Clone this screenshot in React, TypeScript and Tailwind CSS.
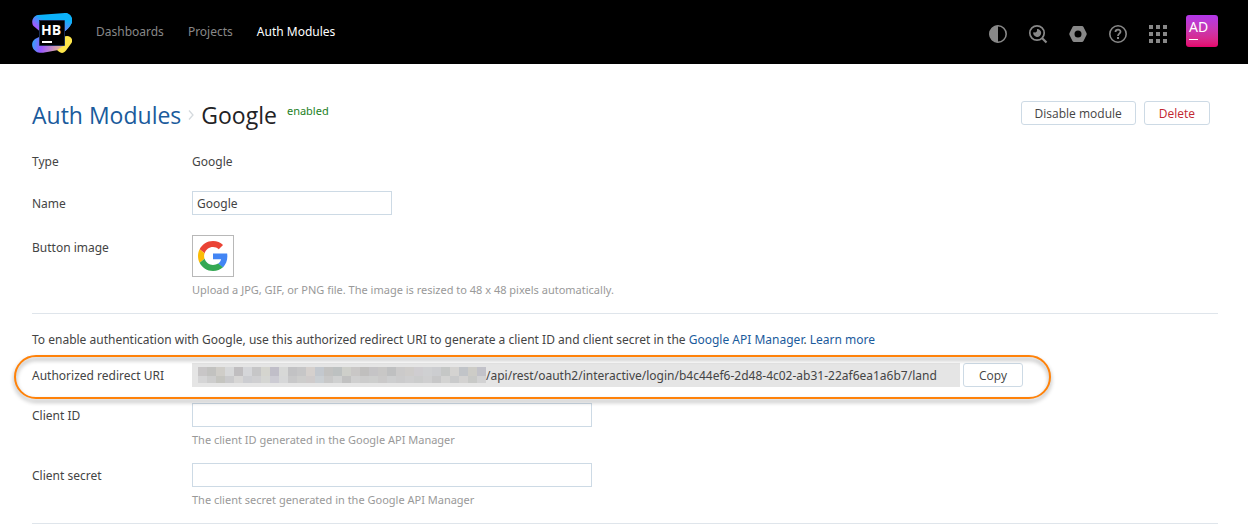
import type { ReactNode } from 'react';

const maskTop = [
  '#c8c6c7', '#c2c2c0', '#cfcdc8', '#d7d8d9', '#c0bec0', '#d5d6d9', '#c6c6c7', '#d5d5cf',
  '#c0bec8', '#d7d8d7', '#c2c2c4', '#c6c6c7', '#d5d0cd', '#c3c8ce', '#c2c2c1', '#bdc1c1',
  '#cecfca', '#c9c7c6', '#c0bfbe', '#c5c4c6', '#c8c7c6', '#bfc0c1', '#cbcaca', '#ceccca',
  '#cfcdd0', '#cfd0d2', '#cccdd0', '#c5c7c6', '#d4d3d1', '#c1c4c8', '#cdccc7', '#c2c2c9',
];
const maskBottom = [
  '#d5d5d6', '#cdcdcd', '#c5c5c0', '#cacacc', '#d7d6d5', '#cccdd1', '#cfcfd1', '#d5d6d3',
  '#cccbd3', '#d6d7d8', '#c8c8c9', '#cdcdcc', '#cfcbcb', '#cacfd3', '#c8c8c8', '#cfd0d0',
  '#c1c1c1', '#cfcfcf', '#cccccc', '#cdcecd', '#cac9c9', '#cdcecf', '#cbcbcc', '#cececf',
  '#cbcccc', '#cfcfd0', '#c7c7c8', '#d3d3d2', '#c9cacb', '#d3d2d1', '#c8c9c7', '#d2d2d3',
];

function MaskedHost() {
  return (
    <svg width="288" height="16" shapeRendering="crispEdges" className="shrink-0" aria-hidden="true">
      {maskTop.map((fill, i) => (
        <rect key={i} x={i * 9} y="0" width="9" height="9" fill={fill} />
      ))}
      {maskBottom.map((fill, i) => (
        <rect key={i} x={i * 9} y="9" width="9" height="7" fill={fill} />
      ))}
    </svg>
  );
}

function HubLogo() {
  return (
    <svg width="40" height="40" viewBox="0 0 40 40" aria-hidden="true">
      <defs>
        <linearGradient id="hubTop" x1="3" y1="16" x2="12" y2="4" gradientUnits="userSpaceOnUse">
          <stop offset="0.2" stopColor="#9b5cff" />
          <stop offset="0.9" stopColor="#0cb2fa" />
        </linearGradient>
        <linearGradient id="hubRight" x1="36" y1="5" x2="34" y2="18" gradientUnits="userSpaceOnUse">
          <stop offset="0.2" stopColor="#0cb2fa" />
          <stop offset="1" stopColor="#6a83f8" />
        </linearGradient>
        <linearGradient id="hubBottom" x1="0" y1="28" x2="34" y2="34" gradientUnits="userSpaceOnUse">
          <stop offset="0" stopColor="#2da6fb" />
          <stop offset="0.3" stopColor="#9a57ff" />
          <stop offset="0.7" stopColor="#cf9bb0" />
          <stop offset="1" stopColor="#e8c67a" />
        </linearGradient>
      </defs>
      <path d="M8 18.500 1.500 13C-1 10 0 3 6 2L33 0C38 0 41 5 40 9 39.500 12 35 17 32 19Z" fill="url(#hubTop)" />
      <path d="M32 .1 33 0C38 0 41 5 40 9 39.500 12 35 17 32 19Z" fill="url(#hubRight)" />
      <path d="M8 23.500 3 26C-1 29-1 35 4 38.500 6 40 9 40 11 39.700L32 36V24Z" fill="url(#hubBottom)" />
      <path d="M32 23.500 35 23C39 23 41.500 27 39.500 30L34 37.500C32 40.500 29 40.500 27 38.800L25 37 32 32.500Z" fill="#fde64b" />
      <rect x="7" y="7" width="25" height="25" fill="#000" />
      <path d="M7.500 7.500H32.500V32.500H7.500Z" fill="none" stroke="#1b2c50" strokeWidth="1" />
      <text x="9" y="21.500" fill="#fff" fontFamily="Open Sans, sans-serif" fontWeight="700" fontSize="14">HB</text>
      <rect x="10" y="28" width="10" height="2" fill="#fff" />
    </svg>
  );
}

function GoogleIcon() {
  return (
    <svg width="30" height="30" viewBox="0 0 48 48" aria-hidden="true">
      <path fill="#EA4335" d="M24 9.500c3.540 0 6.710 1.220 9.210 3.600l6.850-6.850C35.900 2.380 30.470 0 24 0 14.620 0 6.510 5.380 2.560 13.220l7.980 6.190C12.430 13.720 17.740 9.500 24 9.500z" />
      <path fill="#4285F4" d="M46.980 24.550c0-1.570-.15-3.090-.38-4.550H24v9.020h12.940c-.58 2.960-2.260 5.480-4.780 7.180l7.730 6c4.510-4.180 7.090-10.360 7.090-17.650z" />
      <path fill="#FBBC05" d="M10.530 28.590c-.48-1.450-.76-2.990-.76-4.590s.27-3.140.76-4.590l-7.980-6.190C.92 16.460 0 20.120 0 24c0 3.880.92 7.540 2.560 10.780l7.970-6.190z" />
      <path fill="#34A853" d="M24 48c6.480 0 11.930-2.130 15.890-5.810l-7.730-6c-2.150 1.450-4.920 2.300-8.160 2.300-6.260 0-11.570-4.220-13.470-9.910l-7.980 6.190C6.510 42.620 14.620 48 24 48z" />
    </svg>
  );
}

function IconButton({ label, children }: { label: string; children: ReactNode }) {
  return (
    <button type="button" aria-label={label} className="flex h-10 w-10 items-center justify-center text-[#888]">
      <svg width="20" height="20" viewBox="0 0 20 20" fill="none">
        {children}
      </svg>
    </button>
  );
}

function Header() {
  return (
    <header className="flex h-16 items-center bg-black pr-[30px] pl-8">
      <a href="#home" aria-label="Hub home" className="pt-0.5">
        <HubLogo />
      </a>
      <nav className="ml-6 flex gap-6 text-[12px] leading-5 text-[#888]">
        <a href="#dashboards">Dashboards</a>
        <a href="#projects">Projects</a>
        <a href="#auth-modules" className="text-white">Auth Modules</a>
      </nav>
      <div className="ml-auto flex items-center">
        <div className="flex pt-1">
          <IconButton label="Theme">
            <circle cx="10" cy="10" r="8.200" stroke="currentColor" strokeWidth="1.600" />
            <path d="M10 1.500V18.500A8.500 8.500 0 0 1 10 1.500Z" fill="currentColor" />
          </IconButton>
          <IconButton label="Search">
            <circle cx="9" cy="9" r="7.200" stroke="currentColor" strokeWidth="1.700" />
            <path d="M14 14 18.500 18.500" stroke="currentColor" strokeWidth="2.200" />
            <path d="M9 5A4 4 0 1 1 5.300 8.200L7.500 8.500 9 7.200Z" fill="currentColor" />
          </IconButton>
          <IconButton label="Administration">
            <path fillRule="evenodd" d="M6 2H14Q15 2 15.500 3L18.500 9Q19 10 18.500 11L15.500 17Q15 18 14 18H6Q5 18 4.500 17L1.500 11Q1 10 1.500 9L4.500 3Q5 2 6 2ZM10 6.500A3.500 3.500 0 1 0 10 13.500 3.500 3.500 0 1 0 10 6.500Z" fill="currentColor" />
          </IconButton>
          <IconButton label="Help">
            <circle cx="10" cy="10" r="8.200" stroke="currentColor" strokeWidth="1.600" />
            <path d="M7.500 8C7.500 4.800 12.500 4.900 12.500 7.800 12.500 9.700 10 9.700 10 12" stroke="currentColor" strokeWidth="1.800" />
            <rect x="9" y="13" width="2" height="2" fill="currentColor" />
          </IconButton>
          <IconButton label="Services">
            <path d="M1 1h4v4H1zM8 1h4v4H8zM15 1h4v4h-4zM1 8h4v4H1zM8 8h4v4H8zM15 8h4v4h-4zM1 15h4v4H1zM8 15h4v4H8zM15 15h4v4h-4z" fill="currentColor" />
          </IconButton>
        </div>
        <button type="button" aria-label="Profile" className="mb-0.5 ml-2 flex h-8 w-8 flex-col items-start rounded-[3px] bg-linear-to-b from-[#b236ea] to-[#e5006c] pt-1 pl-[3px] text-[14px] leading-4 text-white">
          AD
          <span className="mt-1 h-px w-[9px] bg-white" />
        </button>
      </div>
    </header>
  );
}

const buttonClass = "h-6 rounded-[3px] border border-[#cddae5] bg-white pt-px font-['Open_Sans',sans-serif] text-[12px] leading-4";
const inputClass = 'block h-6 border border-[#cddae5] bg-white px-1 pt-px outline-none';
const rowClass = 'flex leading-6';
const labelClass = 'w-40 shrink-0 pt-px';
const hintClass = 'text-[11px] leading-4 text-[#999]';

export default function App() {
  return (
    <div className="min-h-screen bg-white font-['Noto_Sans',sans-serif] text-[12px] text-[#444]">
      <Header />
      <main className="pr-[30px] pl-8">
        <div className="flex items-start pt-9 pr-2">
          <h1 className="flex items-center font-['Open_Sans',sans-serif] text-[23px] leading-[30px] text-[#1f2326]">
            <a href="#auth-modules" className="text-[#1a5b9c]">Auth Modules</a>
            <svg width="20" height="12" viewBox="0 0 20 12" fill="none" aria-hidden="true">
              <path d="M8 1.500 12 6 8 10.500" stroke="#d5dade" strokeWidth="1.300" />
            </svg>
            Google
          </h1>
          <span className="ml-2.5 pt-[3px] text-[11px] leading-4 text-[#237f24]">enabled</span>
          <div className="ml-auto flex gap-2 pt-px">
            <button type="button" className={`${buttonClass} px-[13px]`}>Disable module</button>
            <button type="button" className={`${buttonClass} px-[14px] text-[#c22731]`}>Delete</button>
          </div>
        </div>

        <div className={`${rowClass} mt-[19px]`}>
          <span className={labelClass}>Type</span>
          <span className="pt-px">Google</span>
        </div>
        <div className={`${rowClass} mt-[17px]`}>
          <label htmlFor="name" className={labelClass}>Name</label>
          <input id="name" type="text" defaultValue="Google" className={`${inputClass} w-[200px]`} />
        </div>
        <div className={`${rowClass} mt-[19px]`}>
          <span className={labelClass}>Button image</span>
          <div>
            <button type="button" aria-label="Button image" className="flex h-[42px] w-[42px] items-center justify-center border border-[#b8b8b8]">
              <GoogleIcon />
            </button>
            <p className={`${hintClass} mt-[5px]`}>
              Upload a JPG, GIF, or PNG file. The image is resized to 48 x 48 pixels automatically.
            </p>
          </div>
        </div>

        <hr className="mt-[15px] border-[#dfe5eb]" />
        <p className="mt-4 leading-5">
          To enable authentication with Google, use this authorized redirect URI to generate a client ID and client secret in the{' '}
          <a href="#google-api" className="text-[#1a5b9c]">Google API Manager</a>.{' '}
          <a href="#learn-more" className="text-[#1a5b9c]">Learn more</a>
        </p>

        <div className="relative mt-[13px] flex h-6 w-fit leading-6">
          <span className={labelClass}>Authorized redirect URI</span>
          <div className="flex min-w-[768px] items-center bg-[#e5e5e5] pr-1 pl-1.5 whitespace-nowrap">
            <MaskedHost />
            <span className="pt-px">/api/rest/oauth2/interactive/login/b4c44ef6-2d48-4c02-ab31-22af6ea1a6b7/land</span>
          </div>
          <button type="button" className={`${buttonClass} ml-[3px] px-[15px]`}>Copy</button>
          <div className="pointer-events-none absolute -top-2 -right-7 -bottom-3 -left-[18px] rounded-full border-2 border-[#ff8209] drop-shadow-[0_3px_2px_rgba(0,0,0,0.4)]" />
        </div>

        <div className={`${rowClass} mt-4`}>
          <label htmlFor="client-id" className={labelClass}>Client ID</label>
          <div>
            <input id="client-id" type="text" className={`${inputClass} w-[400px]`} />
            <p className={`${hintClass} mt-[5px]`}>The client ID generated in the Google API Manager</p>
          </div>
        </div>
        <div className={`${rowClass} mt-[15px]`}>
          <label htmlFor="client-secret" className={labelClass}>Client secret</label>
          <div>
            <input id="client-secret" type="text" className={`${inputClass} w-[400px]`} />
            <p className={`${hintClass} mt-[5px]`}>The client secret generated in the Google API Manager</p>
          </div>
        </div>
        <hr className="mt-[15px] border-[#dfe5eb]" />
      </main>
    </div>
  );
}
